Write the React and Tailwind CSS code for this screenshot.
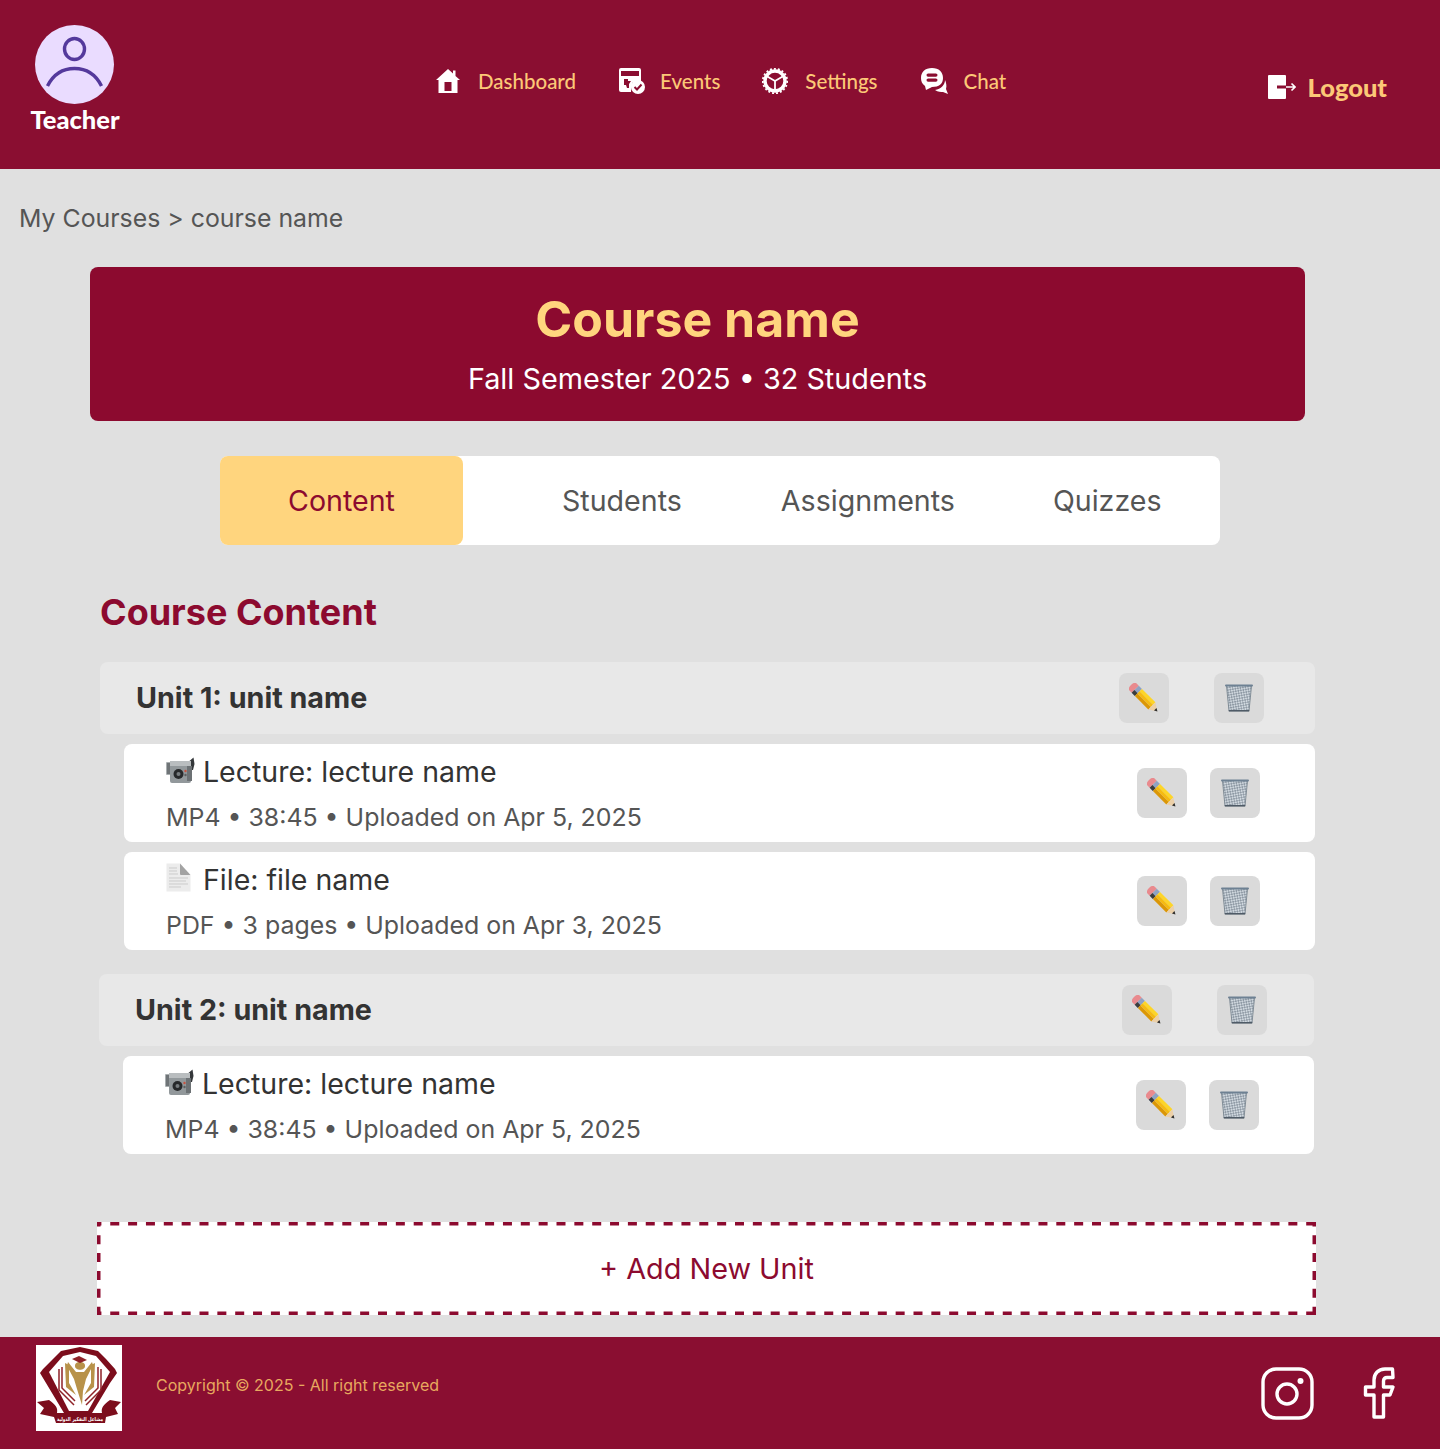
import React from "react";

const Pencil = () => (
  <svg width="30" height="30" viewBox="0 0 30 30" aria-hidden="true">
    <g transform="translate(2 2) rotate(45)">
      <path d="M6 -5 H2.5 C.6 -5 0 -2.4 0 0 C0 2.4 .6 5 2.5 5 H6 Z" fill="#e98a8e" />
      <rect x="6" y="-5" width="4.5" height="10" fill="#8fa2c2" />
      <rect x="6" y="1.2" width="4.5" height="3.8" fill="#3d3d3d" />
      <rect x="10.5" y="-5" width="19" height="3.4" fill="#fdd528" />
      <rect x="10.5" y="-1.6" width="19" height="3.2" fill="#f6bb10" />
      <rect x="10.5" y="1.6" width="19" height="3.4" fill="#db9707" />
      <path d="M29.5 -5 L37 0 L29.5 5 Z" fill="#ecd0a8" />
      <path d="M34.3 -1.8 L37.4 0 L34.3 1.8 Z" fill="#2f2f2f" />
    </g>
  </svg>
);

const Trash = () => (
  <svg width="30" height="30" viewBox="0 0 30 30" aria-hidden="true">
    <defs>
      <pattern id="mesh" width="3.6" height="3.6" patternUnits="userSpaceOnUse" patternTransform="rotate(35)">
        <rect width="3.6" height="3.6" fill="#ced6dd" />
        <path d="M0 0 L3.6 3.6 M3.6 0 L0 3.6" stroke="#6f7c88" strokeWidth=".6" />
      </pattern>
    </defs>
    <path d="M2.5 3 H27.5 L25 28 H5 Z" fill="url(#mesh)" />
    <path d="M2.5 3 L5 28 M27.5 3 L25 28" stroke="#6f7c88" strokeWidth=".8" />
    <rect x="1" y="1.4" width="28" height="2.2" rx="1" fill="#6e8193" />
    <rect x="4.8" y="27" width="20.4" height="1.6" fill="#4f5b67" />
  </svg>
);

const Camera = () => (
  <svg width="29" height="26" viewBox="0 0 29 26" aria-hidden="true">
    <path d="M20 7 L27.5 .5 L28.5 7 L27 13 H20 Z" fill="#34373a" />
    <rect x="0" y="5" width="8" height="13" rx="1" fill="#a9aeb0" />
    <rect x="1" y="6" width="3" height="11" fill="#6f7477" />
    <rect x="4" y="4" width="21" height="22" rx="2" fill="#92989b" />
    <rect x="4" y="4" width="21" height="5" fill="#b9bdbf" />
    <rect x="21" y="9" width="5" height="15" fill="#6c7174" />
    <circle cx="12.5" cy="17" r="5" fill="#26282a" />
    <circle cx="12.5" cy="17" r="2" fill="#767b7e" />
    <circle cx="19.5" cy="14" r="1.2" fill="#c5523f" />
    <circle cx="19.5" cy="18" r="1.2" fill="#5d5f60" />
  </svg>
);

const FileDoc = () => (
  <svg width="25" height="29" viewBox="0 0 25 29" aria-hidden="true">
    <path d="M0.5 0.5 H14 L24.5 12 V28.5 H0.5 Z" fill="#ececec" />
    <path d="M14 0.5 L24.5 12 H15 Q14 12 14 11 Z" fill="#a3a3a3" />
    <path d="M3 5 H11 M3 8 H11 M3 11 H12 M3 15 H22 M3 18 H20 M3 21 H22 M3 24 H15" stroke="#cbcbcb" strokeWidth="1" />
  </svg>
);

const IconBtn = ({ children, className = "" }) => (
  <div className={`flex h-[50px] w-[50px] shrink-0 items-center justify-center rounded-lg bg-[#dadada] ${className}`}>{children}</div>
);

const Lesson = ({ icon, title, meta }) => (
  <div className="flex h-[98px] items-center rounded-lg bg-white pl-[42px] pr-[55px]">
    <div className="flex-1">
      <div className="flex h-[32px] translate-y-[1px] items-center text-[28.5px] leading-[32px] text-[#333]">
        <span className="mr-[8px] flex w-[29px] -translate-y-[2px] justify-start">{icon}</span>
        {title}
      </div>
      <div className="mt-[15px] text-[24.9px] leading-[30px] text-[#555]">{meta}</div>
    </div>
    <IconBtn><Pencil /></IconBtn>
    <IconBtn className="ml-[23px]"><Trash /></IconBtn>
  </div>
);

const UnitHead = ({ title, gapRight }) => (
  <div className={`flex h-[72px] items-center rounded-lg bg-[#e8e8e8] pl-[36px] ${gapRight}`}>
    <div className="flex-1 text-[28.7px] font-bold text-[#333]">{title}</div>
    <IconBtn><Pencil /></IconBtn>
    <IconBtn className="ml-[45px]"><Trash /></IconBtn>
  </div>
);

const NavItem = ({ icon, label, iconW, gap, className = "" }) => (
  <div className={`flex items-center ${className}`}>
    <span className="flex justify-center" style={{ width: iconW, marginRight: gap }}>{icon}</span>
    <span className="text-[20.5px] font-medium leading-[24px] text-[#fcc877]">{label}</span>
  </div>
);

const Logo = () => (
  <div className="h-[86px] w-[86px] shrink-0 bg-white">
    <svg width="86" height="86" viewBox="0 0 86 86" aria-hidden="true">
      <path d="M44 2 L62 6 L70 14 L79 24 L81 28 L74 38 L56 68 H28 L10 38 L4 28 L7 24 L17 14 L25 6 Z" fill="#7c0d1c" />
      <path d="M44 7 L60 11 L74 27 L52 66 H33 L13 27 L27 11 Z" fill="#fff" />
      <path d="M23 24 V45 L38 60 M26 22 V43 L39 56" fill="none" stroke="#8f2228" strokeWidth="1.5" />
      <path d="M65 24 V45 L50 60 M62 22 V43 L49 56" fill="none" stroke="#8f2228" strokeWidth="1.5" />
      <path d="M29 18 L33 20 V38 L40 50 L30 42 Z M59 18 L55 20 V38 L48 50 L58 42 Z" fill="#b8924a" />
      <path d="M32 17 L40 27 H48 L56 17 L57 20 L50 34 L47 46 L46 60 L41 44 L38 34 L31 21 Z" fill="#b8924a" />
      <path d="M39 21 C39 18 41 17 44 17 C47 17 49 18 49 21 C49 26 39 26 39 21 Z" fill="#b8924a" />
      <path d="M36 14 L43 11 L51 15 L44 18 Z" fill="#8f2228" />
      <path d="M1 57 L13 55 C20 60 22 63 21 68 H66 C65 63 67 60 74 55 L85 57 L79 63 L82 69 L70 72 L69 78 H20 L18 72 L4 69 L8 63 Z" fill="#7c0d1c" />
      <text x="44" y="75.5" textAnchor="middle" fontSize="5.4" fontWeight="700" fill="#fff" textLength="46" lengthAdjust="spacingAndGlyphs" direction="rtl" fontFamily="'DejaVu Sans', sans-serif">مشاعل التفكير الدولية</text>
    </svg>
  </div>
);

const dash = { stroke: "#8c0a2f", strokeWidth: 3.5, strokeDasharray: "9 8.85", strokeDashoffset: 4.6, fill: "none" };

export default function App() {
  return (
    <div className="min-h-[1449px] bg-[#e0e0e0] font-['Inter',sans-serif]">
      <header className="flex h-[169px] items-start bg-[#8a0e31] font-['Lato',sans-serif]">
        <div className="ml-[30px] mt-[25px] flex w-[90px] flex-col items-center">
          <svg width="80" height="79" viewBox="0 0 80 79" aria-hidden="true">
            <circle cx="39.5" cy="39.5" r="39.5" fill="#eadcff" />
            <ellipse cx="39.5" cy="24" rx="10" ry="10.5" fill="none" stroke="#54399c" strokeWidth="3.4" />
            <path d="M12.5 61 C18.5 49 28.5 43.5 39.5 43.5 C50.5 43.5 60.5 49 66.5 61" fill="none" stroke="#54399c" strokeWidth="3.4" />
          </svg>
          <span className="text-[25.5px] font-black leading-[30px] text-white">Teacher</span>
        </div>

        <nav className="ml-[316px] mt-[68px] flex items-center">
          <NavItem label="Dashboard" iconW={24} gap={18} icon={
            <svg width="24" height="24" viewBox="0 0 24 24" fill="#fff" aria-hidden="true"><path d="M12 0 L17 4.5 V1.5 H19.5 V7 L24 11 H21.5 V24 H2.5 V11 H0 Z" /><rect x="8.5" y="13" width="7" height="9" fill="#8a0e31" /></svg>
          } />
          <NavItem className="ml-[43px]" label="Events" iconW={26} gap={15} icon={
            <svg width="26" height="26" viewBox="0 0 26 26" aria-hidden="true"><path d="M0 2 Q0 0 2 0 H20 Q22 0 22 2 V14 H14 L12 22 V24 H2 Q0 24 0 22 Z" fill="#fff" /><rect x="2" y="3" width="18" height="5" fill="#8a0e31" /><path d="M5 11 H9 V13 H12 L10 16 V20 H8 L7 17 H5 Z" fill="#8a0e31" /><circle cx="19" cy="19" r="7" fill="#fff" /><path d="M15.5 19 L18 21.5 L22.5 16.5" fill="none" stroke="#8a0e31" strokeWidth="2" /></svg>
          } />
          <NavItem className="ml-[42px]" label="Settings" iconW={26} gap={17} icon={
            <svg width="26" height="26" viewBox="0 0 26 26" fill="none" aria-hidden="true"><circle cx="13" cy="13" r="10" stroke="#fff" strokeWidth="3.4" /><circle cx="13" cy="13" r="12.2" stroke="#fff" strokeWidth="1.8" strokeDasharray="2 2" /><path d="M13 13 L13 23 M13 13 L4.5 8 M13 13 L21.5 8" stroke="#fff" strokeWidth="1.8" /></svg>
          } />
          <NavItem className="ml-[43px]" label="Chat" iconW={27} gap={16} icon={
            <svg width="27" height="26" viewBox="0 0 27 26" aria-hidden="true"><path d="M11 0 C18 0 22 4 22 10 C22 16 18 19 11 19 L5 22 L4 18 C1 16 0 13 0 10 C0 4 4 0 11 0 Z" fill="#fff" /><rect x="5.5" y="5.5" width="11" height="3.2" rx="1.6" fill="#8a0e31" /><rect x="5.5" y="10.5" width="11" height="3.2" rx="1.6" fill="#8a0e31" /><path d="M24 12 C24 17 20 21 14 22 C17 24 20 24 22 24 L27 26 L25 21 C26 18 25 14 24 12 Z" fill="#fff" /></svg>
          } />
        </nav>

        <div className="ml-auto mr-[53px] mt-[72px] flex items-center">
          <svg className="mr-[12px]" width="28" height="26" viewBox="0 0 28 26" aria-hidden="true">
            <rect x="0" y="1" width="18" height="24" rx="1" fill="#fff" />
            <rect x="9" y="11.5" width="9" height="3" fill="#8a0e31" />
            <path d="M18 13 H27 M23.5 9.5 L27 13 L23.5 16.5" fill="none" stroke="#fff" strokeWidth="1.6" />
          </svg>
          <span className="text-[25.5px] font-black leading-[30px] text-[#fcc877]">Logout</span>
        </div>
      </header>

      <div className="pl-[19px] pt-[34px] text-[24.85px] leading-[30px] text-[#555]">My Courses &gt; course name</div>

      <section className="ml-[90px] mt-[34px] flex h-[154px] w-[1215px] flex-col items-center rounded-lg bg-[#8c0a2f] pt-[23px]">
        <h1 className="text-[50px] font-bold leading-[58px] text-[#ffd57e]">Course name</h1>
        <p className="mt-[14px] text-[28.8px] leading-[34px] text-white">Fall Semester 2025 • 32 Students</p>
      </section>

      <div className="ml-[220px] mt-[35px] flex h-[89px] w-[1000px] items-center rounded-lg bg-white pt-[2px] text-[28.6px] text-[#555]">
        <div className="-mt-[2px] flex h-[89px] w-[243px] items-center justify-center rounded-lg bg-[#ffd57e] pt-[2px] text-[#8c0a2f]">Content</div>
        <div className="ml-[99px]">Students</div>
        <div className="ml-[99px]">Assignments</div>
        <div className="ml-[98px]">Quizzes</div>
      </div>

      <h2 className="ml-[100px] mt-[43px] text-[36px] font-bold leading-[48px] text-[#8c0a2f]">Course Content</h2>

      <section className="ml-[100px] mt-[26px] flex w-[1215px] flex-col">
        <UnitHead title="Unit 1: unit name" gapRight="pr-[51px]" />
        <div className="ml-[24px] mt-[10px] flex flex-col gap-[10px]">
          <Lesson icon={<Camera />} title="Lecture: lecture name" meta="MP4 • 38:45 • Uploaded on Apr 5, 2025" />
          <Lesson icon={<FileDoc />} title="File: file name" meta="PDF • 3 pages • Uploaded on Apr 3, 2025" />
        </div>
      </section>

      <section className="ml-[99px] mt-[24px] flex w-[1215px] flex-col">
        <UnitHead title="Unit 2: unit name" gapRight="pr-[47px]" />
        <div className="ml-[24px] mt-[10px]">
          <Lesson icon={<Camera />} title="Lecture: lecture name" meta="MP4 • 38:45 • Uploaded on Apr 5, 2025" />
        </div>
      </section>

      <div className="relative ml-[97px] mt-[68px] flex h-[93px] w-[1219px] items-center justify-center bg-white text-[28.8px] text-[#8c0a2f]">
        <svg className="absolute inset-0" width="1219" height="93" aria-hidden="true">
          <path d="M0 1.75 H1219" {...dash} />
          <path d="M0 91.25 H1219" {...dash} />
          <path d="M1.75 0 V93" {...dash} />
          <path d="M1217.25 0 V93" {...dash} />
        </svg>
        + Add New Unit
      </div>

      <footer className="mt-[22px] flex h-[112px] items-start bg-[#8a0e31]">
        <div className="ml-[36px] mt-[8px]"><Logo /></div>
        <div className="ml-[34px] mt-[38px] text-[16px] leading-[20px] text-[#e8a95f]">Copyright © 2025 - All right reserved</div>
        <div className="ml-auto mr-[44px] mt-[30px] flex items-center">
          <svg width="54" height="54" viewBox="0 0 54 54" fill="none" aria-hidden="true">
            <rect x="2" y="2" width="49" height="49" rx="13" stroke="#fff" strokeWidth="3.4" />
            <circle cx="26" cy="27" r="10" stroke="#fff" strokeWidth="3.4" />
            <circle cx="39.5" cy="14" r="3" fill="#fff" />
          </svg>
          <svg className="ml-[48px]" width="33" height="54" viewBox="0 0 33 54" fill="none" aria-hidden="true">
            <path d="M29.5 2 H22 C15 2 11 7 11 13 V20 H2.5 V28 H11 V50 H20.5 V28 H27 L30 20 H20.5 V14 C20.5 11.5 22 10.5 24 10.5 H30 Z" stroke="#fff" strokeWidth="3.4" strokeLinejoin="round" />
          </svg>
        </div>
      </footer>
    </div>
  );
}
